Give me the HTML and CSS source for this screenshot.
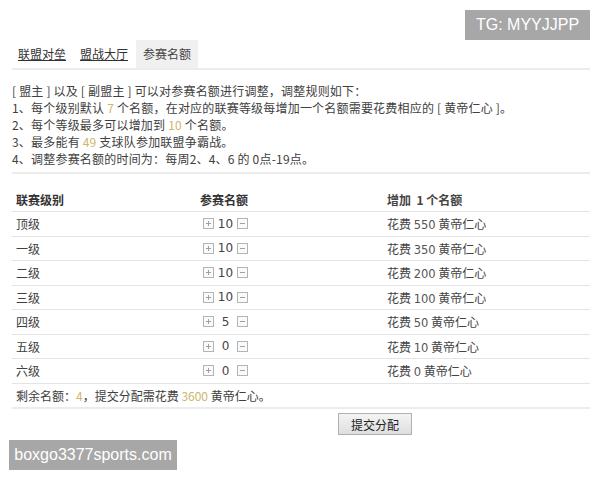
FILE: index.html
```html
<!DOCTYPE html>
<html lang="zh">
<head>
<meta charset="utf-8">
<title>参赛名额</title>
<link rel="stylesheet" href="styles.css">
</head>
<body>
<div class="page">
  <div class="tabs">
    <a class="tab link">联盟对垒</a>
    <a class="tab link">盟战大厅</a>
    <span class="tab active">参赛名额</span>
  </div>
  <div class="rules">
    <p>[ 盟主 ] 以及 [ 副盟主 ] 可以对参赛名额进行调整，调整规则如下：</p>
    <p>1、每个级别默认 <span class="hl">7</span> 个名额，在对应的联赛等级每增加一个名额需要花费相应的 [ 黄帝仁心 ]。</p>
    <p>2、每个等级最多可以增加到 <span class="hl">10</span> 个名额。</p>
    <p>3、最多能有 <span class="hl">49</span> 支球队参加联盟争霸战。</p>
    <p>4、调整参赛名额的时间为：每周2、4、6 的 0点-19点。</p>
  </div>
  <div class="table">
    <div class="row head">
      <span class="c1">联赛级别</span><span class="c2 h2">参赛名额</span><span class="c3">增加&nbsp; 1 个名额</span>
    </div>
    <div class="row"><span class="c1">顶级</span><span class="c2"><i class="btn plus"></i><b class="num">10</b><i class="btn minus"></i></span><span class="c3">花费&nbsp;<span class="n">550</span> 黄帝仁心</span></div>
    <div class="row"><span class="c1">一级</span><span class="c2"><i class="btn plus"></i><b class="num">10</b><i class="btn minus"></i></span><span class="c3">花费&nbsp;<span class="n">350</span> 黄帝仁心</span></div>
    <div class="row"><span class="c1">二级</span><span class="c2"><i class="btn plus"></i><b class="num">10</b><i class="btn minus"></i></span><span class="c3">花费&nbsp;<span class="n">200</span> 黄帝仁心</span></div>
    <div class="row"><span class="c1">三级</span><span class="c2"><i class="btn plus"></i><b class="num">10</b><i class="btn minus"></i></span><span class="c3">花费&nbsp;<span class="n">100</span> 黄帝仁心</span></div>
    <div class="row"><span class="c1">四级</span><span class="c2"><i class="btn plus"></i><b class="num">5</b><i class="btn minus"></i></span><span class="c3">花费&nbsp;<span class="n">50</span> 黄帝仁心</span></div>
    <div class="row"><span class="c1">五级</span><span class="c2"><i class="btn plus"></i><b class="num">0</b><i class="btn minus"></i></span><span class="c3">花费&nbsp;<span class="n">10</span> 黄帝仁心</span></div>
    <div class="row"><span class="c1">六级</span><span class="c2"><i class="btn plus"></i><b class="num">0</b><i class="btn minus"></i></span><span class="c3">花费&nbsp;<span class="n">0</span> 黄帝仁心</span></div>
    <div class="row summary"><span class="c1">剩余名额：<span class="hl">4</span>，提交分配需花费 <span class="hl">3600</span> 黄帝仁心。</span></div>
  </div>
  <div class="actions"><button class="submit">提交分配</button></div>
</div>
<div class="mark mark-top">TG: MYYJJPP</div>
<div class="mark mark-bottom">boxgo3377sports.com</div>
</body>
</html>
```
FILE: styles.css
```css
html, body {
  margin: 0;
  padding: 0;
  background: #fff;
}
body {
  width: 600px;
  height: 480px;
  position: relative;
  overflow: hidden;
  font-family: "Noto Sans CJK SC", "DejaVu Sans", sans-serif;
  font-size: 12px;
  color: #404040;
}
.page {
  margin: 0 10px 0 12px;
  padding-top: 40px;
}
.tabs {
  display: flex;
  align-items: stretch;
  height: 28px;
  border-bottom: 2px solid #ececec;
  padding-left: 6px;
}
.tab {
  display: flex;
  align-items: center;
  font-size: 12px;
  line-height: 1;
}
.link {
  text-decoration: underline;
  color: #333;
  margin-right: 14px;
}
.active {
  background: #f0f0f0;
  padding: 0 7px;
  margin-left: -6px;
  color: #444;
}
.rules {
  padding: 12px 0 5px 0;
  border-bottom: 2px solid #ececec;
}
.rules p {
  margin: 0;
  line-height: 17px;
  white-space: nowrap;
  letter-spacing: 0.2px;
}
.hl {
  color: #cdb66e;
}
.table {
  display: flex;
  flex-direction: column;
}
.row {
  display: grid;
  grid-template-columns: 184px 187px 1fr;
  align-items: center;
  height: 23.5px;
  border-bottom: 1px solid #e4e4e4;
  padding-left: 4px;
}
.row.head {
  height: 24px;
  padding-top: 13px;
  color: #333;
}
.row.head .c1, .row.head .c2, .row.head .c3 {
  font-weight: bold;
}
.row.summary {
  display: flex;
  border-bottom: 2px solid #ececec;
}
.c2 {
  display: flex;
  align-items: center;
  padding-left: 3px;
}
.c2.h2 {
  padding-left: 0;
}
.btn {
  display: inline-block;
  width: 9px;
  height: 9px;
  border: 1px solid #b4b4b4;
  position: relative;
  background: #fafafa;
}
.btn::before {
  content: "";
  position: absolute;
  left: 2px;
  top: 4px;
  width: 5px;
  height: 1px;
  background: #a0a0a0;
}
.plus::after {
  content: "";
  position: absolute;
  left: 4px;
  top: 2px;
  width: 1px;
  height: 5px;
  background: #a0a0a0;
}
.num {
  font-weight: normal;
  width: 17px;
  margin: 0 3px;
  text-align: center;
  font-family: "DejaVu Sans", sans-serif;
  font-size: 12px;
  color: #444;
}
.n {
  font-family: "DejaVu Sans", sans-serif;
  font-size: 11.5px;
  color: #555;
}
.c3 {
  color: #444;
}
.actions {
  display: flex;
  padding-left: 326px;
  padding-top: 4px;
}
.submit {
  width: 74px;
  height: 22px;
  font-family: "Noto Sans CJK SC", sans-serif;
  font-size: 12px;
  color: #222;
  background: linear-gradient(#f4f4f4, #dedede);
  border: 1px solid #b0b0b0;
  border-radius: 0;
  padding: 0;
}
.mark {
  position: absolute;
  background: #a7a7a7;
  color: #fff;
  font-family: "Liberation Sans", Arial, sans-serif;
  font-size: 16px;
  display: flex;
  align-items: center;
  justify-content: center;
}
.mark-top {
  left: 465px;
  top: 10px;
  width: 125px;
  height: 30px;
}
.mark-bottom {
  left: 9px;
  top: 440px;
  width: 168px;
  height: 30px;
}
```
